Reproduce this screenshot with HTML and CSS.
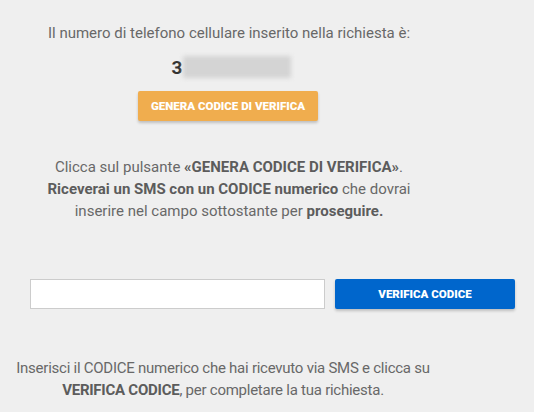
FILE: index.html
```html
<!DOCTYPE html>
<html lang="it">
<head>
<meta charset="utf-8">
<link rel="stylesheet" href="styles.css">
</head>
<body>
<div class="page">
  <section class="top">
    <p class="intro">Il numero di telefono cellulare inserito nella richiesta è:</p>
    <div class="phone"><span class="digit">3</span><span class="blur"></span></div>
    <button class="btn btn-orange">GENERA CODICE DI VERIFICA</button>
    <p class="info">Clicca sul pulsante <b>«GENERA CODICE DI VERIFICA»</b>.<br><b>Riceverai un SMS con un CODICE numerico</b> che dovrai<br>inserire nel campo sottostante per <b>proseguire.</b></p>
  </section>
  <section class="verify">
    <input class="code" type="text">
    <button class="btn btn-blue">VERIFICA CODICE</button>
  </section>
  <section class="bottom">
    <p class="note">Inserisci il CODICE numerico che hai ricevuto via SMS e clicca su<br><b>VERIFICA CODICE</b>, per completare la tua richiesta.</p>
  </section>
</div>
</body>
</html>
```
FILE: styles.css
```css
html, body {
  margin: 0;
  padding: 0;
  background: #efefef;
}
body {
  font-family: Roboto, "Open Sans", sans-serif;
  color: #686868;
  font-size: 15px;
}
p { margin: 0; }
b { font-weight: 700; color: #5c5c5c; }
.page {
  width: 534px;
}
.top {
  width: 458px;
  display: flex;
  flex-direction: column;
  align-items: center;
  text-align: center;
  padding-top: 23px;
}
.intro {
  line-height: 20px;
}
.phone {
  display: flex;
  align-items: center;
  margin-top: 12px;
  margin-left: 5px;
  height: 24px;
}
.digit {
  font-size: 19px;
  font-weight: 700;
  color: #333;
  margin-right: 1px;
}
.blur {
  display: block;
  width: 108px;
  height: 22px;
  background: #d4d4d4;
  filter: blur(2px);
}
.btn {
  border: none;
  border-radius: 2px;
  color: #fff;
  font-family: Roboto, sans-serif;
  font-weight: 900;
  font-size: 11.5px;
  height: 30px;
  padding: 0;
  cursor: pointer;
  box-shadow: 0 2px 3px rgba(0,0,0,0.2);
}
.btn-orange {
  background: #f0ad4e;
  width: 180px;
  margin-top: 12px;
  margin-left: -2px;
}
.info {
  margin-top: 35px;
  line-height: 22px;
}
.verify {
  display: flex;
  gap: 10px;
  padding: 0 19px 0 30px;
  margin-top: 57px;
}
.code {
  box-sizing: border-box;
  width: 295px;
  height: 30px;
  border: 1px solid #ccc;
  background: #fff;
  margin: 0;
}
.btn-blue {
  background: #0066cc;
  width: 180px;
}
.bottom {
  width: 446px;
  text-align: center;
  margin-top: 48px;
}
.note {
  line-height: 22px;
  letter-spacing: -0.25px;
}
```
